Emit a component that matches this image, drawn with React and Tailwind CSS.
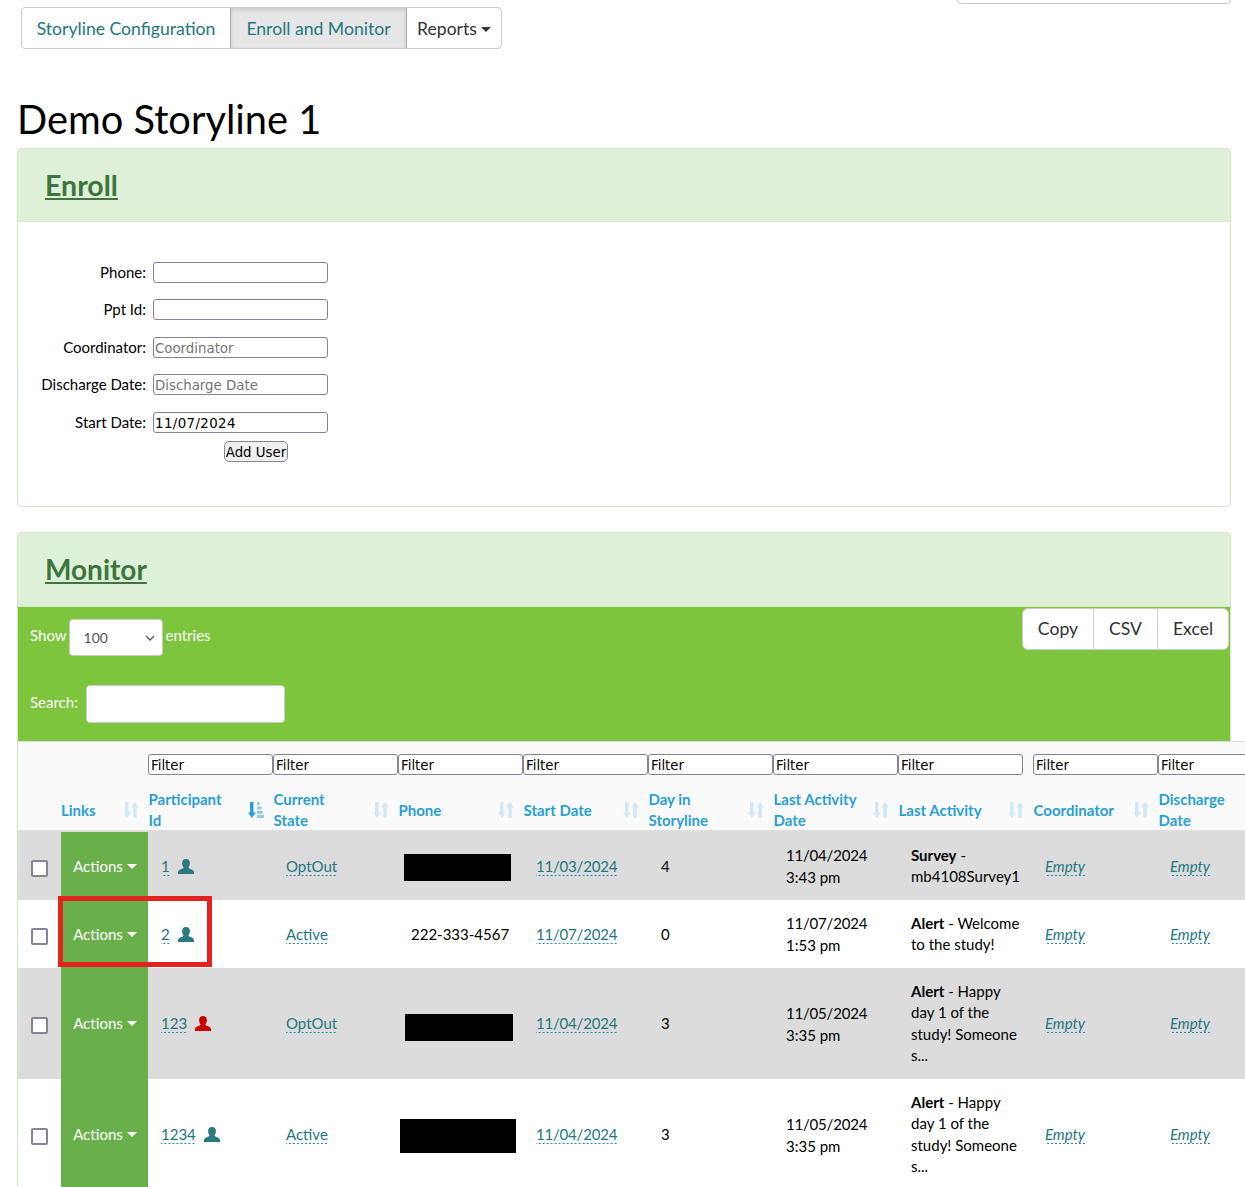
import React from 'react';

// sort arrows used in the table header
const SortIcon = ({ active }) => (
    <svg width="16" height="16" viewBox="0 0 16 16" className="shrink-0">
        <path d="M2 0h3.500v10.500H8L3.750 16 0 10.500h2z" fill={active ? '#2a9fd6' : '#d2e9f5'} />
        {active ? (
            <path d="M9 0h2.500v3H9zM9 4.500h4.500v3H9zM9 9h5.500v3H9zM9 13h7v3H9z" fill="#8ccbea" />
        ) : (
            <path d="M12 0l4 5.500h-2.200V16h-3.500V5.500H8z" fill="#d2e9f5" />
        )}
    </svg>
);

const UserIcon = ({ color }) => (
    <svg width="16" height="15" viewBox="0 0 16 15" className="inline-block">
        <path d="M8 0c2.500 0 3.900 1.600 3.900 4.200 0 1.700-.7 3.200-1.500 4 .2.900 1 1.300 2.100 1.700 1.800.7 3.300 1.400 3.500 3.100v2H0v-2c.2-1.700 1.700-2.400 3.500-3.100 1.100-.4 1.900-.8 2.100-1.700-.8-.8-1.500-2.300-1.500-4C4.100 1.600 5.500 0 8 0z" fill={color} />
    </svg>
);

const Caret = ({ color = 'border-t-white' }) => (
    <span className={`inline-block ml-[4px] align-middle w-0 h-0 border-x-[5px] border-x-transparent border-t-[5px] ${color}`} />
);

const Editable = ({ children, italic, date }) => (
    <span className={`text-[#23777f] pb-[1px] leading-[18px] inline-block bg-[linear-gradient(to_right,#1f8fc0_2px,transparent_2px)] bg-[length:4px_1px] bg-bottom bg-repeat-x ${italic ? 'italic' : ''} ${date ? 'tracking-[-0.2px]' : ''}`}>
        {children}
    </span>
);

const headers = [
    { label: 'Participant Id', active: true },
    { label: 'Current State' },
    { label: 'Phone' },
    { label: 'Start Date' },
    { label: 'Day in Storyline' },
    { label: 'Last Activity Date' },
    { label: 'Last Activity' },
    { label: 'Coordinator' },
    { label: 'Discharge Date' },
];

const rows = [
    { id: '1', state: 'OptOut', redact: 'w-[107px] h-[27px] -ml-[7px] mt-[2px]', start: '11/03/2024', day: '4', last: ['11/04/2024', '3:43 pm'], kind: 'Survey', msg: ['mb4108Survey1'], h: 'h-[68px]', bg: 'bg-[#dcdcdc]' },
    { id: '2', state: 'Active', phone: '222-333-4567', start: '11/07/2024', day: '0', last: ['11/07/2024', '1:53 pm'], kind: 'Alert', msg: ['Welcome', 'to the study!'], h: 'h-[68px]', bg: 'bg-white' },
    { id: '123', red: true, state: 'OptOut', redact: 'w-[108px] h-[27px] -ml-[6px] mt-[8px]', start: '11/04/2024', day: '3', last: ['11/05/2024', '3:35 pm'], kind: 'Alert', msg: ['Happy', 'day 1 of the', 'study! Someone', 's...'], h: 'h-[111px]', bg: 'bg-[#dcdcdc]' },
    { id: '1234', state: 'Active', redact: 'w-[116px] h-[34px] -ml-[11px] mt-[2px]', start: '11/04/2024', day: '3', last: ['11/05/2024', '3:35 pm'], kind: 'Alert', msg: ['Happy', 'day 1 of the', 'study! Someone', 's...'], h: 'h-[111px]', bg: 'bg-white' },
];

const widths = ['w-[125px]', 'w-[125px]', 'w-[125px]', 'w-[125px]', 'w-[125px]', 'w-[125px]', 'w-[135px]', 'w-[125px]', 'w-[125px]'];

const App = () => {
    return (
        <div className="w-[1245px] h-[1187px] overflow-hidden bg-white text-black text-[15px] font-['Lato','Liberation_Sans',sans-serif]">
            {/* clipped box at the very top */}
            <div className="flex justify-end pr-[14px]">
                <div className="w-[274px] h-[4px] border border-t-0 border-[#cccccc] rounded-b" />
            </div>

            {/* Top nav */}
            <div className="ml-[21px] mt-[3px] w-[481px] h-[42px] flex border border-[#cccccc] rounded text-[17.6px]">
                <div className="w-[208px] pt-[2px] flex items-center justify-center text-[#23777f]">Storyline Configuration</div>
                <div className="w-[177px] pt-[2px] flex items-center justify-center text-[#23777f] bg-[#e6e6e6] border-x border-[#adadad] shadow-[inset_0_2px_4px_rgba(0,0,0,0.125)]">Enroll and Monitor</div>
                <div className="flex-1 pt-[2px] flex items-center justify-center text-[#333333]">Reports<Caret color="border-t-[#333333]" /></div>
            </div>

            <h1 className="ml-[17px] mt-[45px] text-[39.8px] leading-[50px] h-[54px] font-normal">Demo Storyline 1</h1>

            {/* Enroll panel */}
            <div className="mx-[17px] w-[1214px] h-[359px] border border-[#d6e9c6] rounded">
                <div className="h-[73px] bg-[#dff0d8] border-b border-[#d6e9c6] flex items-center pl-[27px]">
                    <a className="text-[28.5px] font-bold text-[#3c763d] underline">Enroll</a>
                </div>
                <div className="pt-[40px] flex flex-col">
                    {[
                        ['Phone:', '', 'mb-[16px]'],
                        ['Ppt Id:', '', 'mb-[17px]'],
                        ['Coordinator:', 'Coordinator', 'mb-[16px]'],
                        ['Discharge Date:', 'Discharge Date', 'mb-[17px]'],
                    ].map(([label, ph, mb]) => (
                        <div key={label} className={`flex items-center h-[21px] ${mb}`}>
                            <label className="w-[128px] text-right mr-[7px]">{label}</label>
                            <input placeholder={ph} className="w-[175px] h-[21px] border border-[#85859a] rounded-[3px] px-[1px] pt-[2px] text-[13.33px] font-['DejaVu_Sans',sans-serif] placeholder:text-[#757575]" />
                        </div>
                    ))}
                    <div className="flex items-center h-[21px]">
                        <label className="w-[128px] text-right mr-[7px]">Start Date:</label>
                        <input defaultValue="11/07/2024" className="w-[175px] h-[21px] border border-[#85859a] rounded-[3px] px-[1px] pt-[2px] text-[13.33px] tracking-[0.4px] font-['DejaVu_Sans',sans-serif]" />
                    </div>
                    <button className="ml-[206px] mt-[8px] w-[64px] h-[21px] pt-[2px] border border-[#85859a] rounded-[5px] bg-[#efefef] text-[13.33px] font-['DejaVu_Sans',sans-serif] leading-none">Add User</button>
                </div>
            </div>

            {/* Monitor panel */}
            <div className="ml-[17px] mt-[25px] w-[1214px] border-x border-[#d6e9c6] rounded-t relative">
                <div className="h-[75px] pb-[2px] bg-[#dff0d8] border border-x-0 border-[#d6e9c6] rounded-t flex items-center pl-[27px]">
                    <a className="text-[28px] font-bold text-[#3c763d] underline">Monitor</a>
                </div>

                {/* Green toolbar */}
                <div className="h-[134px] bg-[#7dc53d] text-white relative pl-[12px]">
                    <div className="flex items-start h-[50px]">
                        <span className="mt-[17px]">Show</span>
                        <div className="mt-[12px] ml-[2px] mr-[3px] w-[94px] h-[37px] bg-white border border-[#cccccc] rounded flex items-center justify-between pl-[14px] pr-[7px] text-[#555555] text-[14px]">
                            100
                            <svg width="10" height="6" viewBox="0 0 10 6"><path d="M1 1l4 4 4-4" fill="none" stroke="#555555" strokeWidth="1.300" /></svg>
                        </div>
                        <span className="mt-[17px]">entries</span>
                    </div>
                    <div className="flex items-center mt-[28px]">
                        <span className="pb-[4px]">Search:</span>
                        <input className="ml-[8px] w-[199px] h-[38px] bg-white border border-[#cccccc] rounded" />
                    </div>
                    <div className="absolute right-[1px] top-[1px] flex h-[42px] bg-white border border-[#cccccc] rounded-md text-[17.6px] text-[#333333]">
                        <span className="w-[71px] flex items-center justify-center border-r border-[#cccccc]">Copy</span>
                        <span className="w-[64px] flex items-center justify-center border-r border-[#cccccc]">CSV</span>
                        <span className="w-[70px] flex items-center justify-center">Excel</span>
                    </div>
                </div>

                {/* Table overflows the panel on the right */}
                <div className="relative w-[1310px] bg-white z-10">
                    <div className="flex h-[46px] items-center bg-[#fafafa] border-t border-[#dddddd] pl-[130px]">
                        {widths.map((w, i) => (
                            <div key={i} className={`${w} shrink-0`}>
                                <input placeholder="Filter" className="w-[125px] h-[21px] bg-white border border-[#85859a] rounded-[3px] pl-[2px] pr-[1px] pt-[3px] text-[13.33px] font-['DejaVu_Sans',sans-serif] placeholder:text-black" />
                            </div>
                        ))}
                    </div>
                    <div className="flex h-[45px] pt-[3px] items-center bg-[#fafafa] border-b-2 border-[#dddddd] font-bold text-[#2a9fd6] leading-[21px]">
                        <div className="w-[43px] shrink-0" />
                        <div className="w-[87px] shrink-0 pr-[9px] flex items-center justify-between"><span>Links</span><SortIcon /></div>
                        {headers.map((h, i) => (
                            <div key={h.label} className={`${widths[i]} shrink-0 pl-[0.5px] pr-[9px] flex items-center justify-between`}>
                                <span className="w-[84px]">{h.label}</span>
                                <SortIcon active={h.active} />
                            </div>
                        ))}
                    </div>

                    {rows.map((r) => (
                        <div key={r.id} className={`flex items-center ${r.h} ${r.bg} text-[15px]`}>
                            <div className="w-[43px] shrink-0 flex justify-center pr-[1px] pt-[4px]">
                                <span className="w-[17px] h-[17px] bg-white border-2 border-[#85859a] rounded-[2px]" />
                            </div>
                            <div className="w-[87px] shrink-0 self-stretch pl-[1px] bg-[#6ab04a] text-white flex items-center justify-center">
                                Actions<Caret />
                            </div>
                            <div className="w-[125px] shrink-0 pl-[13px] flex items-center gap-[8px]">
                                <Editable>{r.id}</Editable>
                                <UserIcon color={r.red ? '#c90000' : '#2a7a80'} />
                            </div>
                            <div className="w-[125px] shrink-0 pl-[13px]"><Editable>{r.state}</Editable></div>
                            <div className="w-[125px] shrink-0 pl-[13px]">
                                {r.redact ? <div className={`bg-black ${r.redact}`} /> : r.phone}
                            </div>
                            <div className="w-[125px] shrink-0 pl-[13px]"><Editable date>{r.start}</Editable></div>
                            <div className="w-[125px] shrink-0 pl-[13px]">{r.day}</div>
                            <div className="w-[125px] shrink-0 pl-[13px] leading-[22px]">
                                <div className="tracking-[-0.2px]">{r.last[0]}</div>
                                <div>{r.last[1]}</div>
                            </div>
                            <div className="w-[135px] shrink-0 pl-[13px] leading-[21.5px]">
                                <div><b>{r.kind}</b> - {r.msg[0]}</div>
                                {r.msg.slice(1).map((m) => <div key={m}>{m}</div>)}
                            </div>
                            <div className="w-[125px] shrink-0 pl-[12px]"><Editable italic>Empty</Editable></div>
                            <div className="w-[125px] shrink-0 pl-[12px]"><Editable italic>Empty</Editable></div>
                        </div>
                    ))}

                    {/* red annotation box */}
                    <div className="absolute left-[40px] top-[155px] w-[154px] h-[71px] border-[5px] border-[#e32222]" />
                </div>
            </div>
        </div>
    );
};

export default App;
